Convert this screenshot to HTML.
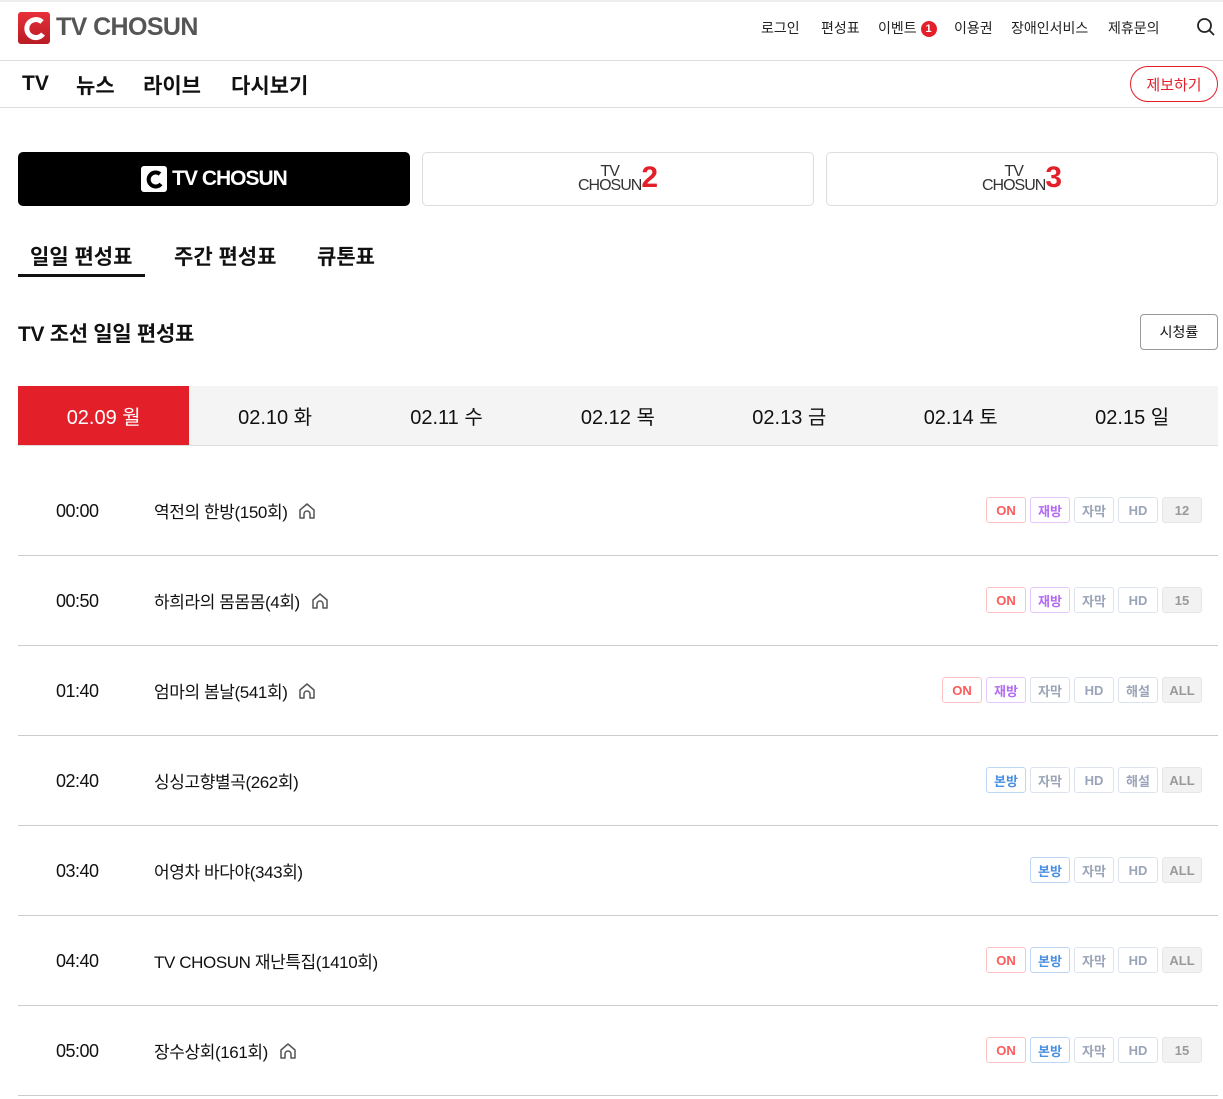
<!DOCTYPE html>
<html><head><meta charset="utf-8"><style>
*{margin:0;padding:0;box-sizing:border-box}
body{width:1223px;height:1099px;overflow:hidden;background:#fff;font-family:"Liberation Sans","Noto Sans CJK KR",sans-serif;color:#111;position:relative}
.a{position:absolute}
.top{top:0;left:0;width:1223px;height:2px;background:#eee}
.l1{top:60px;left:0;width:1223px;height:1px;background:#ddd}
.l2{top:107px;left:0;width:1223px;height:1px;background:#ddd}
.util{top:18px;font-size:14px;color:#222}
.nav{top:70px;font-size:21px;font-weight:bold;color:#111}
.ch{top:152px;height:54px;width:392px;border:1px solid #ddd;border-radius:5px;display:flex;align-items:center;justify-content:center}
.sub{top:241px;font-size:21px;font-weight:bold}
.date{top:386px;height:59px;width:171.4px;background:#f4f4f4;font-size:20px;display:flex;align-items:center;justify-content:center;color:#111}
.row{left:18px;width:1200px;height:90px;border-bottom:1px solid #ccc}
.tm{position:absolute;left:38px;top:35px;font-size:18px;letter-spacing:-0.5px}
.tt{position:absolute;left:136px;top:32px;font-size:17px;display:flex;align-items:center;gap:10px;letter-spacing:-0.4px}
.bd{position:absolute;right:16px;top:31px;display:flex;gap:4px}
.b{width:40px;height:26px;border:1px solid #dde3ee;border-radius:3px;font-size:13px;font-weight:bold;color:#9aa4b8;display:flex;align-items:center;justify-content:center}
.on{border-color:#ffc2c2;color:#ff5a5a}
.re{border-color:#e6c8ff;color:#b36bf5}
.bo{border-color:#bcd6f7;color:#4a90e2}
.ag{background:#f2f2f2;border-color:#e6e6e6;color:#999}
</style></head><body>
<div class="a top"></div>
<div class="a" style="left:18px;top:12px;width:32px;height:32px;border-radius:3px;background:linear-gradient(#e8303a,#b81c24)"><svg width="32" height="32" viewBox="0 0 32 32"><path d="M24 10 A9 9 0 1 0 25 22" stroke="#fff" stroke-width="5" fill="none"/></svg></div>
<div class="a" style="left:56px;top:13px;font-size:25px;font-weight:bold;color:#555;letter-spacing:-0.6px">TV CHOSUN</div>
<div class="a util" style="left:761px">로그인</div>
<div class="a util" style="left:821px">편성표</div>
<div class="a util" style="left:878px">이벤트 <span style="display:inline-block;width:16px;height:16px;border-radius:50%;background:#e3202a;color:#fff;font-size:11px;font-weight:bold;text-align:center;line-height:16px;vertical-align:1px">1</span></div>
<div class="a util" style="left:954px">이용권</div>
<div class="a util" style="left:1011px">장애인서비스</div>
<div class="a util" style="left:1108px">제휴문의</div>
<svg class="a" style="left:1196px;top:17px" width="20" height="20" viewBox="0 0 20 20"><circle cx="8.5" cy="8.5" r="6.5" stroke="#222" stroke-width="1.8" fill="none"/><path d="M13 13l5 5" stroke="#222" stroke-width="1.8"/></svg>
<div class="a l1"></div>
<div class="a nav" style="left:22px;top:72px">TV</div>
<div class="a nav" style="left:76px">뉴스</div>
<div class="a nav" style="left:143px">라이브</div>
<div class="a nav" style="left:231px">다시보기</div>
<div class="a" style="left:1130px;top:66px;width:88px;height:36px;border:1px solid #e3202a;border-radius:18px;color:#e3202a;font-size:15px;display:flex;align-items:center;justify-content:center">제보하기</div>
<div class="a l2"></div>
<div class="a ch" style="left:18px;background:#000;border-color:#000"><span style="display:inline-block;width:26px;height:26px;background:#fff;border-radius:3px;margin-right:5px"><svg width="26" height="26"><path d="M19 8 A7 7 0 1 0 20 18" stroke="#000" stroke-width="4" fill="none"/></svg></span><span style="color:#fff;font-size:21px;font-weight:bold;letter-spacing:-1px">TV CHOSUN</span></div>
<div class="a ch" style="left:422px"><span style="font-size:16px;color:#333;line-height:14px;text-align:center;letter-spacing:-1px">TV<br>CHOSUN</span><span style="color:#e3202a;font-size:30px;font-weight:bold;margin-top:-2px">2</span></div>
<div class="a ch" style="left:826px"><span style="font-size:16px;color:#333;line-height:14px;text-align:center;letter-spacing:-1px">TV<br>CHOSUN</span><span style="color:#e3202a;font-size:30px;font-weight:bold;margin-top:-2px">3</span></div>
<div class="a sub" style="left:30px">일일 편성표</div>
<div class="a" style="left:18px;top:274px;width:127px;height:3px;background:#111"></div>
<div class="a sub" style="left:174px">주간 편성표</div>
<div class="a sub" style="left:317px">큐톤표</div>
<div class="a" style="left:18px;top:318px;font-size:21px;font-weight:bold;letter-spacing:-0.3px">TV 조선 일일 편성표</div>
<div class="a" style="left:1140px;top:314px;width:78px;height:36px;border:1px solid #999;border-radius:4px;font-size:14px;display:flex;align-items:center;justify-content:center">시청률</div>
<div class="a date" style="left:18px;background:#e3202a;color:#fff">02.09 월</div>
<div class="a date" style="left:189.4px">02.10 화</div>
<div class="a date" style="left:360.8px">02.11 수</div>
<div class="a date" style="left:532.2px">02.12 목</div>
<div class="a date" style="left:703.6px">02.13 금</div>
<div class="a date" style="left:875px">02.14 토</div>
<div class="a date" style="left:1046.4px;width:171.6px">02.15 일</div>
<div class="a" style="left:18px;top:445px;width:1200px;height:1px;background:#ddd"></div>
<svg width="0" height="0" style="position:absolute"><defs><symbol id="h" viewBox="0 0 20 20"><path d="M3 9L10 3l7 6v8h-4v-4a3 3 0 0 0-6 0v4H3z" stroke="#555" stroke-width="1.5" fill="none" stroke-linejoin="round"/></symbol></defs></svg>

<div class="a row" style="top:466px"><div class="tm">00:00</div><div class="tt">역전의 한방(150회)<svg width="20" height="20"><use href="#h"/></svg></div><div class="bd"><div class="b on">ON</div><div class="b re">재방</div><div class="b">자막</div><div class="b">HD</div><div class="b ag">12</div></div></div>
<div class="a row" style="top:556px"><div class="tm">00:50</div><div class="tt">하희라의 몸몸몸(4회)<svg width="20" height="20"><use href="#h"/></svg></div><div class="bd"><div class="b on">ON</div><div class="b re">재방</div><div class="b">자막</div><div class="b">HD</div><div class="b ag">15</div></div></div>
<div class="a row" style="top:646px"><div class="tm">01:40</div><div class="tt">엄마의 봄날(541회)<svg width="20" height="20"><use href="#h"/></svg></div><div class="bd"><div class="b on">ON</div><div class="b re">재방</div><div class="b">자막</div><div class="b">HD</div><div class="b">해설</div><div class="b ag">ALL</div></div></div>
<div class="a row" style="top:736px"><div class="tm">02:40</div><div class="tt">싱싱고향별곡(262회)</div><div class="bd"><div class="b bo">본방</div><div class="b">자막</div><div class="b">HD</div><div class="b">해설</div><div class="b ag">ALL</div></div></div>
<div class="a row" style="top:826px"><div class="tm">03:40</div><div class="tt">어영차 바다야(343회)</div><div class="bd"><div class="b bo">본방</div><div class="b">자막</div><div class="b">HD</div><div class="b ag">ALL</div></div></div>
<div class="a row" style="top:916px"><div class="tm">04:40</div><div class="tt">TV CHOSUN 재난특집(1410회)</div><div class="bd"><div class="b on">ON</div><div class="b bo">본방</div><div class="b">자막</div><div class="b">HD</div><div class="b ag">ALL</div></div></div>
<div class="a row" style="top:1006px"><div class="tm">05:00</div><div class="tt">장수상회(161회)<svg width="20" height="20"><use href="#h"/></svg></div><div class="bd"><div class="b on">ON</div><div class="b bo">본방</div><div class="b">자막</div><div class="b">HD</div><div class="b ag">15</div></div></div>
</body></html>
